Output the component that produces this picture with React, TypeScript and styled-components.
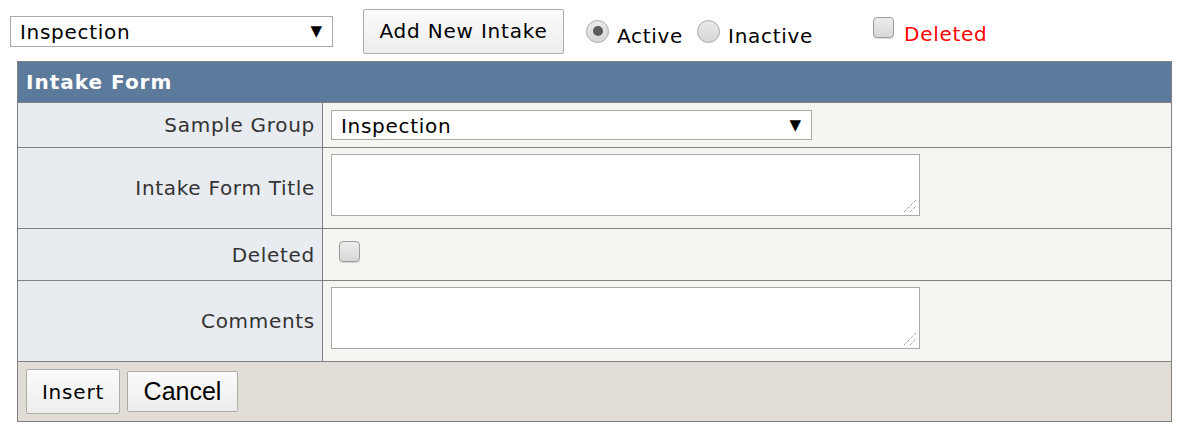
import React from "react";
import styled, { createGlobalStyle } from "styled-components";

const Global = createGlobalStyle`
  html, body { margin: 0; padding: 0; background: #fff; }
  body { font-family: "DejaVu Sans", Verdana, sans-serif; font-size: 20px; color: #000; letter-spacing: 0.7px; }
`;

const Page = styled.div`
  width: 1200px;
  height: 439px;
  box-sizing: border-box;
  padding: 9px 0 0 10px;
`;

const Toolbar = styled.div`
  display: flex;
  align-items: center;
  height: 44px;
`;

const SelectBox = styled.div<{ $w: number; $h: number }>`
  box-sizing: border-box;
  width: ${(p) => p.$w}px;
  height: ${(p) => p.$h}px;
  border: 1px solid #a9a9a9;
  background: #fff;
  display: flex;
  align-items: center;
  justify-content: space-between;
  padding: 1px 10px 0 9px;
  font-size: 20px;
  color: #000;
`;

const Arrow = styled.span`
  font-size: 15px;
  line-height: 1;
  letter-spacing: 0;
`;

const Button = styled.button<{ $w: number; $h: number; $arial?: boolean }>`
  box-sizing: border-box;
  width: ${(p) => p.$w}px;
  height: ${(p) => p.$h}px;
  border: 1px solid #acacac;
  border-radius: 2px;
  background: linear-gradient(#fbfbfb, #ededed);
  font-family: ${(p) => (p.$arial ? '"Liberation Sans", Arial, sans-serif' : '"DejaVu Sans", Verdana, sans-serif')};
  font-size: ${(p) => (p.$arial ? 25 : 20)}px;
  letter-spacing: ${(p) => (p.$arial ? 0 : 0.8)}px;
  color: #000;
  padding: 0;
  display: flex;
  align-items: center;
  justify-content: center;
`;

const Option = styled.label<{ $ml: number; $red?: boolean }>`
  display: flex;
  align-items: center;
  margin-left: ${(p) => p.$ml}px;
  font-size: 20px;
  color: ${(p) => (p.$red ? "#ff0000" : "#000")};
`;

const OptionText = styled.span<{ $mt: number }>`
  margin-top: ${(p) => p.$mt}px;
`;

const Radio = styled.span<{ $on?: boolean }>`
  box-sizing: border-box;
  width: 23px;
  height: 23px;
  border-radius: 50%;
  border: 1px solid #a8a8a8;
  background: linear-gradient(#e9e9e9, #d6d6d6);
  display: flex;
  align-items: center;
  justify-content: center;
  margin-right: 8px;
  &::after {
    content: "";
    display: ${(p) => (p.$on ? "block" : "none")};
    width: 10px;
    height: 10px;
    border-radius: 50%;
    background: #5a5a5a;
  }
`;

const Check = styled.span<{ $mr?: number; $mt?: number }>`
  box-sizing: border-box;
  display: inline-block;
  flex: none;
  width: 21px;
  height: 21px;
  border-radius: 4px;
  border: 1px solid #9c9c9c;
  background: linear-gradient(#ececec, #d8d8d8);
  box-shadow: 0 1px 1px rgba(0, 0, 0, 0.15);
  margin-right: ${(p) => p.$mr ?? 0}px;
  margin-top: ${(p) => p.$mt ?? 0}px;
`;

const Form = styled.table`
  margin-top: 8px;
  margin-left: 7px;
  width: 1155px;
  border-collapse: collapse;
  border: 1px solid #808080;
`;

const HeadCell = styled.th`
  background: #5c7a9c;
  color: #fff;
  font-weight: bold;
  letter-spacing: 1px;
  text-align: left;
  height: 40px;
  padding: 0 0 0 8px;
  font-size: 20px;
  border-bottom: 1px solid #808080;
`;

const Row = styled.tr<{ $h: number }>`
  height: ${(p) => p.$h}px;
`;

const Label = styled.td`
  box-sizing: border-box;
  width: 305px;
  background: #e8ebf0;
  color: #333;
  text-align: right;
  padding: 0 7px 0 0;
  border: 1px solid #808080;
  font-size: 20px;
`;

const Value = styled.td<{ $top?: boolean; $pl?: number }>`
  background: #f6f5f1;
  padding: ${(p) => (p.$top ? "6px" : "0")} 0 0 ${(p) => p.$pl ?? 8}px;
  border: 1px solid #808080;
  vertical-align: ${(p) => (p.$top ? "top" : "middle")};
`;

const TextArea = styled.div`
  position: relative;
  box-sizing: border-box;
  width: 589px;
  height: 62px;
  border: 1px solid #a9a9a9;
  background: #fff;
`;

const Grip = styled.svg`
  position: absolute;
  right: 2px;
  bottom: 2px;
`;

const Footer = styled.td`
  background: #e1ddd6;
  height: 59px;
  padding: 0 0 0 8px;
  border-top: 1px solid #808080;
`;

const FooterBar = styled.div`
  display: flex;
  align-items: center;
  gap: 7px;
`;

const Area = () => (
  <TextArea>
    <Grip width="14" height="14" viewBox="0 0 14 14">
      <line x1="1" y1="13" x2="13" y2="1" stroke="#777" strokeWidth="1" strokeDasharray="1 1" />
      <line x1="7" y1="13" x2="13" y2="7" stroke="#777" strokeWidth="1" strokeDasharray="1 1" />
    </Grip>
  </TextArea>
);

export default function App() {
  return (
    <Page>
      <Global />
      <Toolbar>
        <SelectBox $w={323} $h={31}>
          <span>Inspection</span>
          <Arrow>▼</Arrow>
        </SelectBox>
        <Button $w={201} $h={45} style={{ marginLeft: 30 }}>Add New Intake</Button>
        <Option $ml={22}>
          <Radio $on />
          <OptionText $mt={9}>Active</OptionText>
        </Option>
        <Option $ml={14}>
          <Radio />
          <OptionText $mt={9}>Inactive</OptionText>
        </Option>
        <Option $ml={60} $red>
          <Check $mr={10} $mt={-8} />
          <OptionText $mt={5}>Deleted</OptionText>
        </Option>
      </Toolbar>
      <Form>
        <thead>
          <tr>
            <HeadCell colSpan={2}>Intake Form</HeadCell>
          </tr>
        </thead>
        <tbody>
          <Row $h={45}>
            <Label>Sample Group</Label>
            <Value>
              <SelectBox $w={481} $h={30}>
                <span>Inspection</span>
                <Arrow>▼</Arrow>
              </SelectBox>
            </Value>
          </Row>
          <Row $h={81}>
            <Label>Intake Form Title</Label>
            <Value $top>
              <Area />
            </Value>
          </Row>
          <Row $h={52}>
            <Label>Deleted</Label>
            <Value $pl={16}>
              <Check $mt={-3} />
            </Value>
          </Row>
          <Row $h={81}>
            <Label>Comments</Label>
            <Value $top>
              <Area />
            </Value>
          </Row>
          <tr>
            <Footer colSpan={2}>
              <FooterBar>
                <Button $w={94} $h={45}>Insert</Button>
                <Button $w={111} $h={41} $arial>Cancel</Button>
              </FooterBar>
            </Footer>
          </tr>
        </tbody>
      </Form>
    </Page>
  );
}
